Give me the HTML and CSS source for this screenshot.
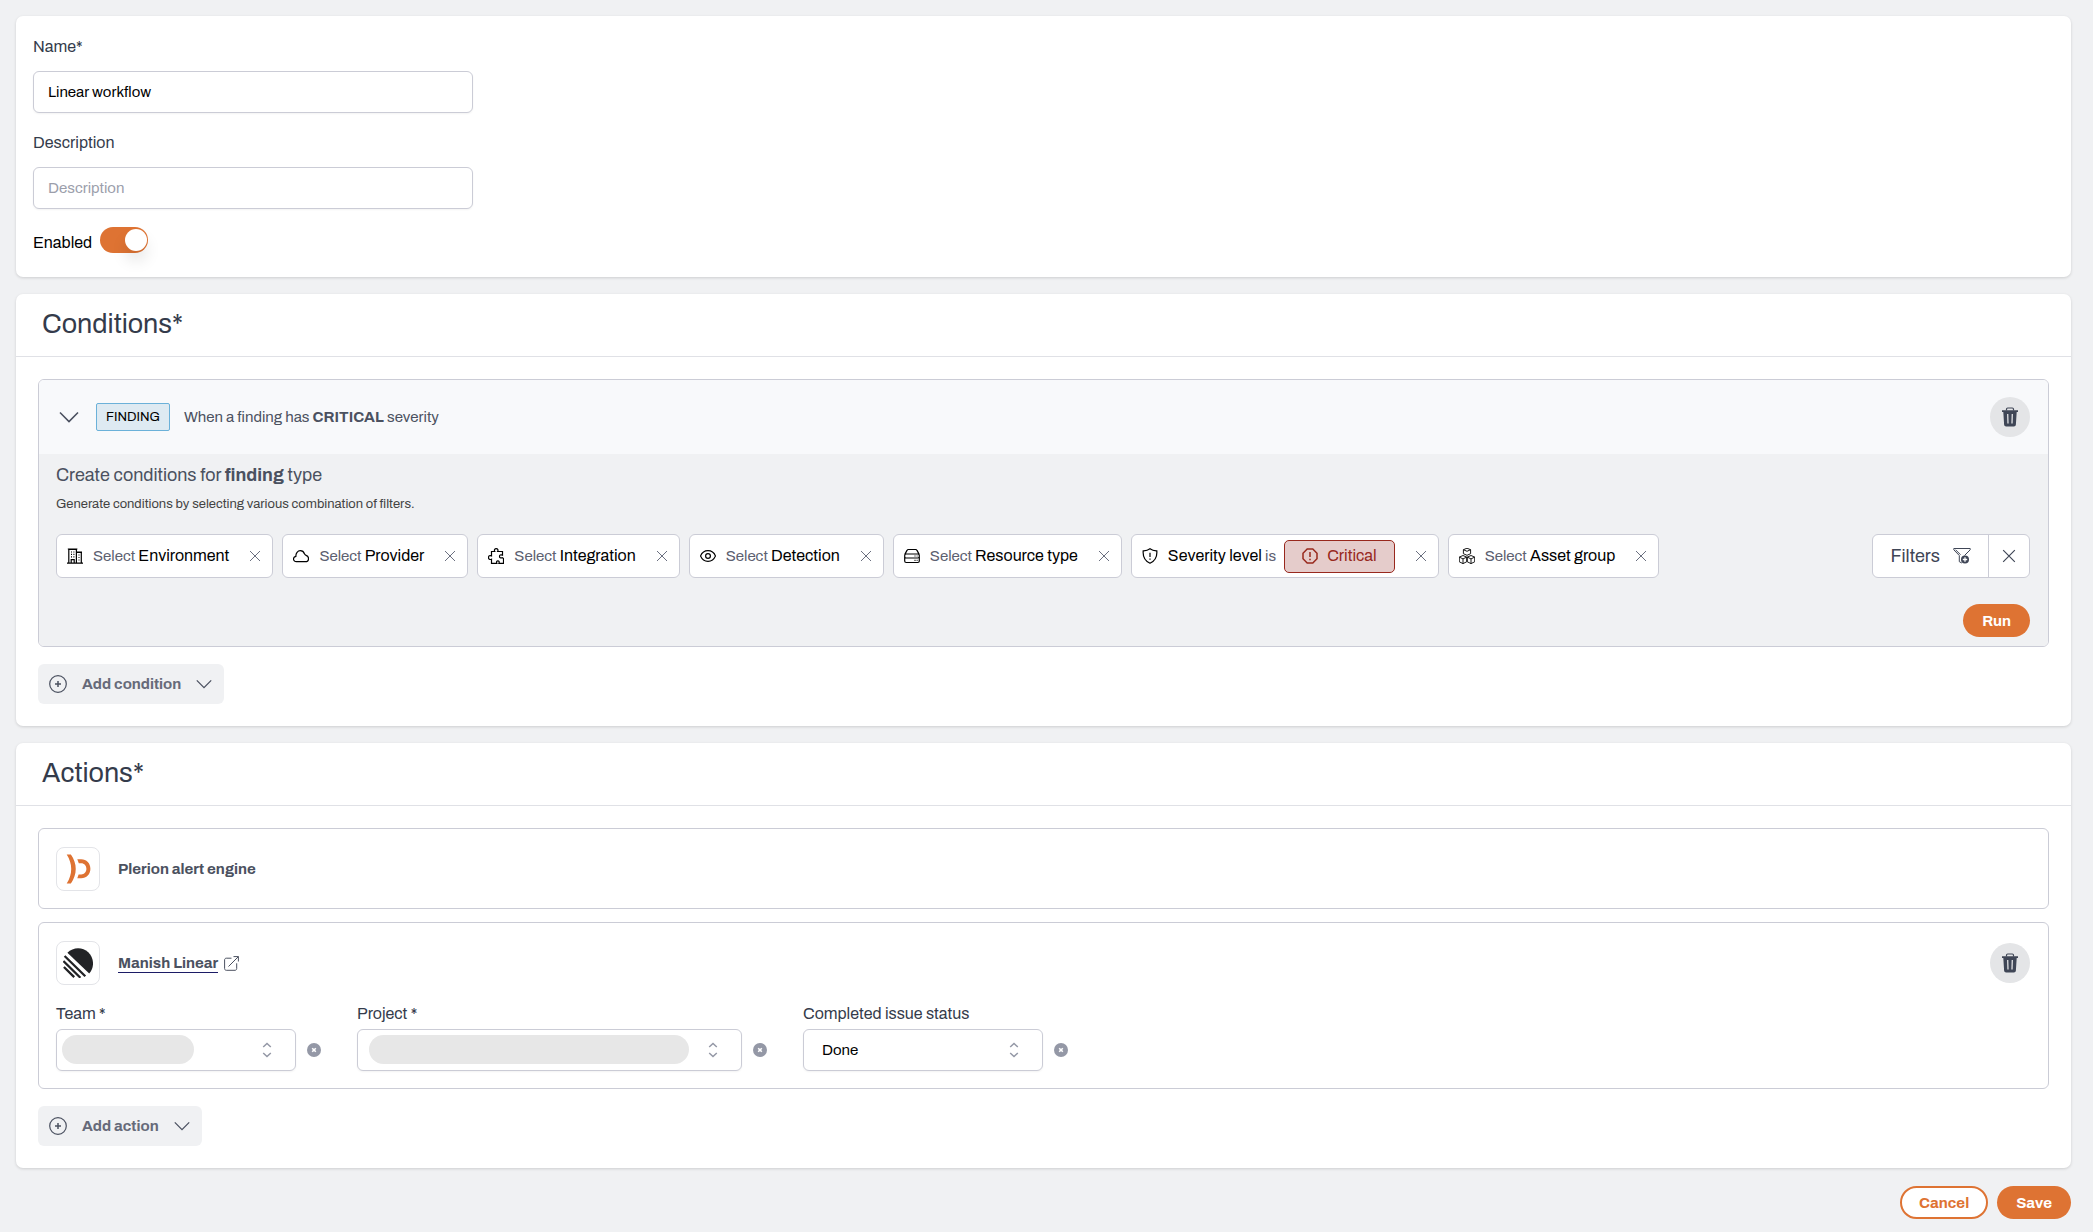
FILE: index.html
```html
<!DOCTYPE html>
<html lang="en">
<head>
  <meta charset="UTF-8" />
  <meta name="viewport" content="width=device-width, initial-scale=1.0"/>
  <title>Linear workflow</title>
  <link rel="stylesheet" href="styles.css">
</head>
<body>
  <!-- Shared icons -->
  <svg class="icon-defs" aria-hidden="true">
    <symbol id="icon-close" viewBox="0 0 12 12"><path d="M1 1l10 10M11 1L1 11"/></symbol>
    <symbol id="icon-chevron" viewBox="0 0 20 12"><path d="M1 1.500l9 9 9-9" stroke-width="1.600"/></symbol>
    <symbol id="icon-plus" viewBox="0 0 18 18"><circle cx="9" cy="9" r="8.300" stroke-width="1.200"/><path d="M9 6v6M6 9h6" stroke-width="1.500"/></symbol>
    <symbol id="icon-updown" viewBox="0 0 10 16"><path d="M1.200 5L5 1.500 8.800 5M1.200 11L5 14.500 8.800 11" stroke-width="1.500"/></symbol>
    <symbol id="icon-clear" viewBox="0 0 14 14"><circle cx="7" cy="7" r="7" fill="#9498a6" stroke="none"/><path d="M5.200 5.200l3.600 3.600M8.800 5.200L5.200 8.800" stroke="#fff" stroke-width="1.600"/></symbol>
    <symbol id="icon-trash" viewBox="0 0 18 20">
      <path d="M5.500 3.500V2.200C5.500 1.500 6 1 6.700 1h4.600c.7 0 1.200.5 1.200 1.200v1.300" fill="none" stroke="#3f4656" stroke-width="1.200"/>
      <path d="M1 3.300h16v1.600h-1.300l-.8 12.700c-.1 1.200-.9 2-2 2H5.100c-1.100 0-1.900-.8-2-2L2.300 4.900H1z" fill="#3f4656" stroke="none"/>
      <path d="M6.700 7l.3 9.500M11.300 7l-.3 9.500" fill="none" stroke="#e2e3e5" stroke-width="1.300"/>
    </symbol>
  </svg>

  <form class="workflow">
    <section class="card details">
      <label class="label" for="name">Name*</label>
      <input class="text-input" type="text" id="name" value="Linear workflow">
      <label class="label" for="description">Description</label>
      <input class="text-input" type="text" id="description" placeholder="Description">
      <div class="toggle-row">
        <label for="enabled">Enabled</label>
        <input class="toggle" type="checkbox" id="enabled" checked>
      </div>
    </section>

    <section class="card">
      <h2 class="card-title">Conditions*</h2>
      <div class="card-body">
        <div class="panel">
          <div class="condition-head">
            <button type="button" class="icon-button" aria-label="Collapse"><svg class="icon chevron-lg"><use href="#icon-chevron"/></svg></button>
            <span class="badge">FINDING</span>
            <p class="summary">When a finding has <b>CRITICAL</b> severity</p>
            <button type="button" class="trash-button" aria-label="Delete condition"><svg class="icon trash"><use href="#icon-trash"/></svg></button>
          </div>
          <div class="condition-body">
            <h3>Create conditions for <b>finding</b> type</h3>
            <p class="hint">Generate conditions by selecting various combination of filters.</p>
            <div class="filter-row">
              <div class="chips">
                <div class="chip">
                  <svg class="icon chip-icon" viewBox="0 0 16 16"><path d="M1.800 15V1.300h7.600V15M9.400 4.300h4.900V15M0 15.200h16M.8 1h9.600M9.400 4.200h5.600"/><path d="M4 4h1M6.400 4h1M4 6.400h1M6.400 6.400h1M4 8.800h1M6.400 8.800h1M11.500 7h1M11.500 9.500h1M11.500 12h1M4.200 15v-3.300h3V15"/></svg>
                  <button type="button" class="chip-text">Select <strong>Environment</strong></button>
                  <button type="button" class="icon-button" aria-label="Remove environment"><svg class="icon close"><use href="#icon-close"/></svg></button>
                </div>
                <div class="chip">
                  <svg class="icon chip-icon" viewBox="0 0 16 16"><path d="M3.400 13.700C1.700 13.700.5 12.500.5 11c0-1.400 1-2.500 2.400-2.700C2.700 5.200 4.700 2.700 7.300 2.700c2 0 3.500 1.200 4.100 3 .3 1 .8 1.400 1.700 1.700 1.500.5 2.400 1.600 2.400 3.100 0 1.800-1.300 3.200-3.100 3.200z"/></svg>
                  <button type="button" class="chip-text">Select <strong>Provider</strong></button>
                  <button type="button" class="icon-button" aria-label="Remove provider"><svg class="icon close"><use href="#icon-close"/></svg></button>
                </div>
                <div class="chip">
                  <svg class="icon chip-icon" viewBox="0 0 16 16"><path d="M3.500 3.500h3.300C5.900 1.900 6.700.6 8.200.6s2.300 1.300 1.400 2.900h4.900v3.600c-2.100-.7-3 .1-3 1.300s1 2 3 1.300l1 1v4.700h-4.600c.7-1.700.1-2.600-1-2.600s-1.800.9-1 2.600H3.500v-4.200C1.700 12 .5 11.200.5 9.500S1.700 7.200 3.500 7.900z"/></svg>
                  <button type="button" class="chip-text">Select <strong>Integration</strong></button>
                  <button type="button" class="icon-button" aria-label="Remove integration"><svg class="icon close"><use href="#icon-close"/></svg></button>
                </div>
                <div class="chip">
                  <svg class="icon chip-icon" viewBox="0 0 16 16"><path d="M.5 8C2 4.500 4.700 2.700 8 2.700S14 4.500 15.500 8C14 11.500 11.300 13.300 8 13.300S2 11.500.5 8z"/><circle cx="8" cy="8" r="2.400"/></svg>
                  <button type="button" class="chip-text">Select <strong>Detection</strong></button>
                  <button type="button" class="icon-button" aria-label="Remove detection"><svg class="icon close"><use href="#icon-close"/></svg></button>
                </div>
                <div class="chip">
                  <svg class="icon chip-icon" viewBox="0 0 16 16"><path d="M.7 6.600L3 2.400c.3-.6.7-.9 1.400-.9h7.200c.7 0 1.100.3 1.400.9l2.300 4.200M2.200 6h11.600c.9 0 1.500.6 1.500 1.500v1c0 .9-.6 1.500-1.500 1.500H2.200C1.300 10 .7 9.400.7 8.500v-1C.7 6.600 1.300 6 2.200 6zM.7 9v4c0 .9.6 1.500 1.500 1.500h11.600c.9 0 1.500-.6 1.500-1.500V9M10.500 8h1M12.700 8h.8M10.500 12.300h1M12.700 12.300h.8"/></svg>
                  <button type="button" class="chip-text">Select <strong>Resource type</strong></button>
                  <button type="button" class="icon-button" aria-label="Remove resource type"><svg class="icon close"><use href="#icon-close"/></svg></button>
                </div>
                <div class="chip chip-severity">
                  <svg class="icon chip-icon" viewBox="0 0 16 16"><path d="M8 .8c2 1.500 4.300 2.100 6.800 2 .5 5.800-1.600 10-6.800 12.400C2.800 12.800.7 8.600 1.200 2.800 3.700 2.900 6 2.300 8 .8zM8 4.800v4.200M8 10.600v1.100"/></svg>
                  <button type="button" class="chip-text"><strong>Severity level</strong> is</button>
                  <span class="severity">
                    <svg class="icon chip-icon" viewBox="0 0 16 16"><path d="M5.200 1h5.600L15 5.200v5.600L10.800 15H5.200L1 10.800V5.200zM8 4v5M8 10.700v1.500" stroke-width="1.500"/></svg>
                    Critical
                  </span>
                  <button type="button" class="icon-button" aria-label="Remove severity"><svg class="icon close"><use href="#icon-close"/></svg></button>
                </div>
                <div class="chip">
                  <svg class="icon chip-icon" viewBox="0 0 16 16"><path d="M8 .2l3.600 1.500v4L8 7.300 4.400 5.700v-4zM4.400 1.700L8 3.300l3.600-1.600M4 7.500l3.700 1.600v4.700L4 15.600.3 13.800V9.100zM.3 9.100L4 10.900l3.700-1.800M4 10.900v4.700M12 7.500l3.700 1.600v4.700L12 15.600l-3.700-1.800V9.100zM8.300 9.100l3.700 1.800 3.700-1.800M12 10.900v4.700" stroke-width=".9"/></svg>
                  <button type="button" class="chip-text">Select <strong>Asset group</strong></button>
                  <button type="button" class="icon-button" aria-label="Remove asset group"><svg class="icon close"><use href="#icon-close"/></svg></button>
                </div>
              </div>
              <div class="filters">
                <button type="button" class="filters-main">Filters
                  <svg class="icon funnel" viewBox="0 0 18 18"><path d="M.8 1.500h16.400v1.300L11.500 8.500M.8 1.500v1.300l5.500 5.700v6.200l2.500 1.300M2.500 2.700l5 5"/><circle cx="12" cy="12.500" r="4" fill="#3f4656" stroke="none"/><path d="M12 10.300v4.400M9.800 12.500h4.400" stroke="#fff" stroke-width="1.300"/></svg>
                </button>
                <button type="button" class="filters-clear" aria-label="Clear filters"><svg class="icon close-lg"><use href="#icon-close"/></svg></button>
              </div>
            </div>
            <div class="run-row">
              <button type="button" class="pill-button">Run</button>
            </div>
          </div>
        </div>
        <button type="button" class="add-button">
          <svg class="icon plus"><use href="#icon-plus"/></svg>
          Add condition
          <svg class="icon chevron"><use href="#icon-chevron"/></svg>
        </button>
      </div>
    </section>

    <section class="card">
      <h2 class="card-title">Actions*</h2>
      <div class="card-body">
        <div class="panel action">
          <div class="action-head">
            <span class="logo">
              <svg viewBox="0 0 30 30"><path d="M3.700.5h4.200c6.500 9.500 6.500 19.500 0 29H3.700c6-9.500 6-19.500 0-29z" fill="#de7333"/><path d="M14.300 5.300h3.900c5.300 0 9.200 4 9.200 9.500s-3.900 9.500-9.200 9.500h-3.900l1.300-3.900h2.600c3 0 5.200-2.300 5.200-5.600s-2.200-5.600-5.200-5.600h-2.400z" fill="#de7333"/></svg>
            </span>
            <span class="action-name">Plerion alert engine</span>
          </div>
        </div>
        <div class="panel action">
          <div class="action-head">
            <span class="logo">
              <svg viewBox="0 0 30 30"><path d="M4.400 4.700C10-1 19.300-1.500 25.300 4.300c6 6 6.300 15.300.9 21.300z" fill="#222326"/><path d="M1.600 8.300L22.300 28.600M.4 13.400L17.400 30M.9 19.300L11.200 29.400" transform="translate(0 -.3)" fill="none" stroke="#222326" stroke-width="2.300"/></svg>
            </span>
            <a class="action-name" href="#">Manish Linear</a>
            <svg class="icon external" viewBox="0 0 15 15"><path d="M7.500 2.200H2.300C1.300 2.200.6 2.900.6 3.900v8.700c0 1 .7 1.700 1.700 1.700H11c1 0 1.700-.7 1.700-1.700V7.300M9.500.6h4.900v4.900M14.400.6L4.500 10.500"/></svg>
            <button type="button" class="trash-button" aria-label="Delete action"><svg class="icon trash"><use href="#icon-trash"/></svg></button>
          </div>
          <div class="fields">
            <div class="field">
              <label class="label" for="team">Team *</label>
              <div class="field-row">
                <div class="select-box">
                  <select id="team"><option></option></select>
                  <span class="masked masked-team"></span>
                  <svg class="icon updown"><use href="#icon-updown"/></svg>
                </div>
                <button type="button" class="icon-button" aria-label="Clear team"><svg class="icon clear"><use href="#icon-clear"/></svg></button>
              </div>
            </div>
            <div class="field">
              <label class="label" for="project">Project *</label>
              <div class="field-row">
                <div class="select-box select-wide">
                  <select id="project"><option></option></select>
                  <span class="masked masked-project"></span>
                  <svg class="icon updown"><use href="#icon-updown"/></svg>
                </div>
                <button type="button" class="icon-button" aria-label="Clear project"><svg class="icon clear"><use href="#icon-clear"/></svg></button>
              </div>
            </div>
            <div class="field">
              <label class="label" for="status">Completed issue status</label>
              <div class="field-row">
                <div class="select-box">
                  <select id="status"><option>Done</option></select>
                  <svg class="icon updown"><use href="#icon-updown"/></svg>
                </div>
                <button type="button" class="icon-button" aria-label="Clear status"><svg class="icon clear"><use href="#icon-clear"/></svg></button>
              </div>
            </div>
          </div>
        </div>
        <button type="button" class="add-button">
          <svg class="icon plus"><use href="#icon-plus"/></svg>
          Add action
          <svg class="icon chevron"><use href="#icon-chevron"/></svg>
        </button>
      </div>
    </section>

    <div class="form-actions">
      <button type="button" class="pill-button pill-outline">Cancel</button>
      <button type="submit" class="pill-button">Save</button>
    </div>
  </form>
</body>
</html>
```
FILE: styles.css
```css
* {
  margin: 0;
  padding: 0;
  box-sizing: border-box;
}

body {
  font-family: Archivo, "Liberation Sans", Arial, sans-serif;
  font-size: 15px;
  line-height: 24px;
  color: #4b5160;
  background-color: #f0f1f3;
}

button,
input,
select {
  font: inherit;
  color: inherit;
}

button {
  background: none;
  border: none;
  cursor: pointer;
}

.icon-defs {
  position: absolute;
  width: 0;
  height: 0;
}

.icon {
  display: block;
  flex: none;
  fill: none;
  stroke: currentColor;
}

.workflow {
  display: flex;
  flex-direction: column;
  gap: 17px;
  padding: 16px 22px 12px 16px;
}

.card {
  background: white;
  border-radius: 7px;
  box-shadow: 0 1px 3px rgba(0, 0, 0, 0.15);
}

.label {
  display: block;
  font-size: 16px;
  color: #343b4b;
}

/* Name, description, enabled */
.details {
  display: flex;
  flex-direction: column;
  align-items: flex-start;
  padding: 19px 17px 24px;
}

.text-input {
  width: 440px;
  max-width: 100%;
  height: 42px;
  margin: 12px 0 18px;
  padding: 0 14px;
  color: black;
  background: white;
  border: 1px solid #cbccd6;
  border-radius: 6px;
  box-shadow: 0 1px 2px rgba(0, 0, 0, 0.05);
}

.text-input::placeholder {
  color: #9b9eab;
}

.toggle-row {
  display: flex;
  align-items: flex-end;
  gap: 8px;
  font-size: 16px;
  line-height: 20px;
  color: black;
}

.toggle {
  appearance: none;
  display: flex;
  justify-content: flex-end;
  width: 48px;
  height: 26px;
  padding: 2px 1px;
  background: #de7333;
  border-radius: 13px;
  cursor: pointer;
}

.toggle::before {
  content: "";
  width: 22px;
  height: 22px;
  background: white;
  border-radius: 50%;
  box-shadow: 0 10px 15px rgba(0, 0, 0, 0.1);
}

.toggle:not(:checked) {
  justify-content: flex-start;
  background: #cbccd6;
}

/* Conditions */
.card-title {
  padding: 0 26px 1px;
  font-size: 27px;
  font-weight: normal;
  line-height: 61px;
  color: #343b4b;
  border-bottom: 1px solid #e0e1e6;
}

.card-body {
  padding: 22px;
}

.panel {
  border: 1px solid #cbccd6;
  border-radius: 6px;
  overflow: hidden;
}

.condition-head {
  display: flex;
  align-items: center;
  height: 74px;
  padding: 0 18px 0 20px;
  background: #f8f9fb;
}

.icon-button {
  display: flex;
  flex: none;
}

.chevron-lg {
  width: 20px;
  height: 12px;
}

.badge {
  margin: 0 14px 0 17px;
  padding: 0 9px;
  font-size: 13px;
  line-height: 26px;
  color: black;
  background: #deeaf2;
  border: 1px solid #6bb1d9;
  border-radius: 2px;
}

.trash-button {
  display: flex;
  align-items: center;
  justify-content: center;
  width: 40px;
  height: 40px;
  margin-left: auto;
  background: #e4e5e7;
  border-radius: 50%;
}

.trash {
  width: 18px;
  height: 20px;
}

.condition-body {
  padding: 9px 18px 9px 17px;
  background: #f0f1f3;
}

.condition-body h3 {
  font-size: 18px;
  font-weight: normal;
}

.hint {
  margin: 7px 0 20px;
  font-size: 13px;
  line-height: 20px;
  color: #444;
}

.filter-row {
  display: flex;
  align-items: flex-start;
  justify-content: space-between;
  gap: 16px;
}

.chips {
  display: flex;
  flex-wrap: wrap;
  gap: 9px;
}

.chip {
  display: flex;
  align-items: center;
  height: 44px;
  padding: 0 11px 0 10px;
  background: white;
  border: 1px solid #cbccd6;
  border-radius: 6px;
}

.chip-icon {
  width: 16px;
  height: 16px;
  color: black;
  stroke-width: 1.2;
}

.chip-text {
  margin: 0 20px 0 10px;
  color: #5c6070;
  white-space: nowrap;
}

.chip-text strong {
  font-size: 16px;
  font-weight: normal;
  color: black;
}

.chip-severity .chip-text {
  margin-right: 8px;
}

.close {
  width: 12px;
  height: 12px;
  color: #6b7080;
}

.severity {
  display: flex;
  align-items: center;
  gap: 9px;
  height: 33px;
  margin-right: 20px;
  padding: 0 17px;
  font-size: 16px;
  color: #98281d;
  background: #e5cccb;
  border: 1px solid #98281d;
  border-radius: 5px;
}

.severity .chip-icon {
  color: #98281d;
}

.filters {
  display: flex;
  flex: none;
  height: 44px;
  color: #3f4656;
  background: white;
  border: 1px solid #cbccd6;
  border-radius: 6px;
}

.filters-main {
  display: flex;
  align-items: center;
  gap: 13px;
  padding: 0 17px 0 18px;
  font-size: 18px;
}

.funnel {
  width: 18px;
  height: 18px;
}

.filters-clear {
  display: flex;
  align-items: center;
  justify-content: center;
  width: 41px;
  border-left: 1px solid #cbccd6;
}

.close-lg {
  width: 14px;
  height: 14px;
}

.run-row {
  display: flex;
  justify-content: flex-end;
  margin-top: 26px;
}

.pill-button {
  height: 33px;
  padding: 0 19px;
  font-weight: bold;
  color: white;
  background: #de7333;
  border-radius: 17px;
}

.pill-outline {
  padding: 0 17px;
  color: #de7333;
  background: white;
  border: 2px solid #de7333;
}

.add-button {
  display: flex;
  align-items: center;
  gap: 15px;
  height: 40px;
  margin-top: 17px;
  padding: 0 12px 0 11px;
  font-weight: bold;
  color: #666a79;
  background: #f0f1f3;
  border-radius: 6px;
}

.add-button .icon {
  color: #4b5160;
}

.plus {
  width: 18px;
  height: 18px;
}

.chevron {
  width: 16px;
  height: 10px;
}

/* Actions */
.action {
  padding: 18px 18px 17px 17px;
}

.action + .action {
  margin-top: 13px;
}

.action-head {
  display: flex;
  align-items: center;
}

.logo {
  display: flex;
  align-items: center;
  justify-content: center;
  width: 44px;
  height: 44px;
  margin-right: 18px;
  border: 1px solid #e3e4e8;
  border-radius: 8px;
}

.logo svg {
  width: 30px;
  height: 30px;
}

.action-name {
  font-weight: bold;
  color: #4b5160;
}

a.action-name {
  line-height: 18px;
  text-decoration: none;
  border-bottom: 1px solid #1c1c66;
}

.external {
  width: 15px;
  height: 15px;
  margin-left: 6px;
}

.fields {
  display: flex;
  flex-wrap: wrap;
  gap: 36px;
  margin-top: 17px;
}

.field-row {
  display: flex;
  align-items: center;
  gap: 11px;
  margin-top: 3px;
}

.select-box {
  position: relative;
  width: 240px;
}

.select-wide {
  width: 385px;
}

.select-box select {
  appearance: none;
  display: block;
  width: 100%;
  height: 42px;
  padding: 0 40px 0 18px;
  color: black;
  background: white;
  border: 1px solid #cbccd6;
  border-radius: 6px;
  box-shadow: 0 1px 2px rgba(0, 0, 0, 0.05);
}

.updown {
  position: absolute;
  top: 13px;
  right: 24px;
  width: 10px;
  height: 16px;
  color: #9498a6;
  pointer-events: none;
}

.masked {
  position: absolute;
  top: 6px;
  height: 29px;
  background: #e7e7e7;
  border-radius: 15px;
  pointer-events: none;
}

.masked-team {
  left: 6px;
  width: 132px;
}

.masked-project {
  left: 12px;
  width: 320px;
}

.clear {
  width: 14px;
  height: 14px;
}

.form-actions {
  display: flex;
  justify-content: flex-end;
  gap: 9px;
  padding-top: 1px;
}
```
